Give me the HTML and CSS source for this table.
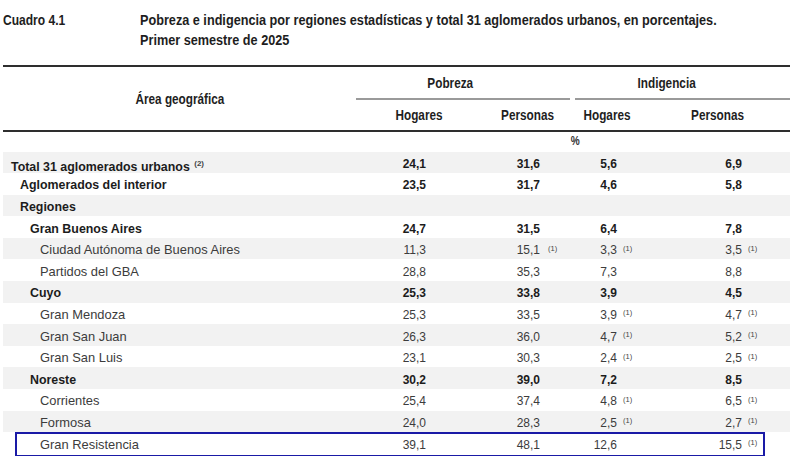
FILE: index.html
```html
<!DOCTYPE html>
<html lang="es">
<head>
<meta charset="utf-8">
<title>Cuadro 4.1</title>
<link rel="stylesheet" href="styles.css">
</head>
<body>
<div class="page">
  <header class="caption">
    <div class="caption-num"><span class="cond cond-left">Cuadro 4.1</span></div>
    <div class="caption-title">
      <span class="cond-line">Pobreza e indigencia por regiones estadísticas y total 31 aglomerados urbanos, en porcentajes.</span>
      <span class="cond-line">Primer semestre de 2025</span>
    </div>
  </header>

  <div class="table">
    <div class="thead">
      <div class="th th-area"><span class="cond">Área geográfica</span></div>
      <div class="th th-group th-pob"><span class="cond">Pobreza</span></div>
      <div class="th th-group th-ind"><span class="cond">Indigencia</span></div>
      <div class="th th-sub th-c1"><span class="cond">Hogares</span></div>
      <div class="th th-sub th-c2"><span class="cond">Personas</span></div>
      <div class="th th-sub th-c3"><span class="cond">Hogares</span></div>
      <div class="th th-sub th-c4"><span class="cond">Personas</span></div>
    </div>
    <div class="unit-row"><span class="cond">%</span></div>

    <div class="row bold">
      <div class="label l0">Total 31 aglomerados urbanos <span class="note">(2)</span></div>
      <div class="cell c1"><span class="num">24,1</span></div>
      <div class="cell c2"><span class="num">31,6</span></div>
      <div class="cell c3"><span class="num">5,6</span></div>
      <div class="cell c4"><span class="num">6,9</span></div>
    </div>
    <div class="row bold">
      <div class="label l1">Aglomerados del interior</div>
      <div class="cell c1"><span class="num">23,5</span></div>
      <div class="cell c2"><span class="num">31,7</span></div>
      <div class="cell c3"><span class="num">4,6</span></div>
      <div class="cell c4"><span class="num">5,8</span></div>
    </div>
    <div class="row bold">
      <div class="label l1">Regiones</div>
      <div class="cell c1"></div>
      <div class="cell c2"></div>
      <div class="cell c3"></div>
      <div class="cell c4"></div>
    </div>
    <div class="row bold">
      <div class="label l2">Gran Buenos Aires</div>
      <div class="cell c1"><span class="num">24,7</span></div>
      <div class="cell c2"><span class="num">31,5</span></div>
      <div class="cell c3"><span class="num">6,4</span></div>
      <div class="cell c4"><span class="num">7,8</span></div>
    </div>
    <div class="row">
      <div class="label l3">Ciudad Autónoma de Buenos Aires</div>
      <div class="cell c1"><span class="num">11,3</span></div>
      <div class="cell c2"><span class="num">15,1</span><span class="note">(1)</span></div>
      <div class="cell c3"><span class="num">3,3</span><span class="note">(1)</span></div>
      <div class="cell c4"><span class="num">3,5</span><span class="note">(1)</span></div>
    </div>
    <div class="row">
      <div class="label l3">Partidos del GBA</div>
      <div class="cell c1"><span class="num">28,8</span></div>
      <div class="cell c2"><span class="num">35,3</span></div>
      <div class="cell c3"><span class="num">7,3</span></div>
      <div class="cell c4"><span class="num">8,8</span></div>
    </div>
    <div class="row bold">
      <div class="label l2">Cuyo</div>
      <div class="cell c1"><span class="num">25,3</span></div>
      <div class="cell c2"><span class="num">33,8</span></div>
      <div class="cell c3"><span class="num">3,9</span></div>
      <div class="cell c4"><span class="num">4,5</span></div>
    </div>
    <div class="row">
      <div class="label l3">Gran Mendoza</div>
      <div class="cell c1"><span class="num">25,3</span></div>
      <div class="cell c2"><span class="num">33,5</span></div>
      <div class="cell c3"><span class="num">3,9</span><span class="note">(1)</span></div>
      <div class="cell c4"><span class="num">4,7</span><span class="note">(1)</span></div>
    </div>
    <div class="row">
      <div class="label l3">Gran San Juan</div>
      <div class="cell c1"><span class="num">26,3</span></div>
      <div class="cell c2"><span class="num">36,0</span></div>
      <div class="cell c3"><span class="num">4,7</span><span class="note">(1)</span></div>
      <div class="cell c4"><span class="num">5,2</span><span class="note">(1)</span></div>
    </div>
    <div class="row">
      <div class="label l3">Gran San Luis</div>
      <div class="cell c1"><span class="num">23,1</span></div>
      <div class="cell c2"><span class="num">30,3</span></div>
      <div class="cell c3"><span class="num">2,4</span><span class="note">(1)</span></div>
      <div class="cell c4"><span class="num">2,5</span><span class="note">(1)</span></div>
    </div>
    <div class="row bold">
      <div class="label l2">Noreste</div>
      <div class="cell c1"><span class="num">30,2</span></div>
      <div class="cell c2"><span class="num">39,0</span></div>
      <div class="cell c3"><span class="num">7,2</span></div>
      <div class="cell c4"><span class="num">8,5</span></div>
    </div>
    <div class="row">
      <div class="label l3">Corrientes</div>
      <div class="cell c1"><span class="num">25,4</span></div>
      <div class="cell c2"><span class="num">37,4</span></div>
      <div class="cell c3"><span class="num">4,8</span><span class="note">(1)</span></div>
      <div class="cell c4"><span class="num">6,5</span><span class="note">(1)</span></div>
    </div>
    <div class="row">
      <div class="label l3">Formosa</div>
      <div class="cell c1"><span class="num">24,0</span></div>
      <div class="cell c2"><span class="num">28,3</span></div>
      <div class="cell c3"><span class="num">2,5</span><span class="note">(1)</span></div>
      <div class="cell c4"><span class="num">2,7</span><span class="note">(1)</span></div>
    </div>
    <div class="row highlight">
      <div class="label l3">Gran Resistencia</div>
      <div class="cell c1"><span class="num">39,1</span></div>
      <div class="cell c2"><span class="num">48,1</span></div>
      <div class="cell c3"><span class="num">12,6</span></div>
      <div class="cell c4"><span class="num">15,5</span><span class="note">(1)</span></div>
    </div>
  </div>
</div>
</body>
</html>
```

FILE: styles.css
```css
* { box-sizing: border-box; }

html, body {
  margin: 0;
  padding: 0;
  background: #ffffff;
}

body {
  width: 790px;
  height: 456px;
  overflow: hidden;
  font-family: "Liberation Sans", Arial, sans-serif;
  color: #222222;
}

.page {
  width: 795px;
  padding-left: 3px;
}

/* condensed look: Liberation Sans squeezed horizontally */
.cond {
  display: inline-block;
  white-space: nowrap;
  transform: scaleX(0.84);
  transform-origin: center;
}

.cond-left {
  transform: scaleX(0.86);
  transform-origin: left center;
}

.cond-line {
  display: block;
  white-space: nowrap;
  transform: scaleX(0.905);
  transform-origin: left center;
}

/* ---------- caption ---------- */
.caption {
  display: flex;
  padding-top: 10px;
  margin-bottom: 15px;
  font-weight: bold;
  font-size: 14px;
  line-height: 20px;
  color: #1e1e1e;
}

.caption-num {
  width: 137px;
  flex: none;
}

/* ---------- table header ---------- */
.table {
  width: 792px;
}

.thead {
  display: grid;
  grid-template-columns: 353px 127px 90px 68px 154px;
  grid-template-rows: 33px 30px;
  border-top: 2px solid #2e2e2e;
  border-bottom: 2px solid #2e2e2e;
  font-weight: bold;
  font-size: 14px;
  color: #1e1e1e;
}

.th {
  display: flex;
  align-items: center;
  justify-content: center;
  line-height: 16px;
}

.th-area {
  grid-column: 1;
  grid-row: 1 / span 2;
}

.th-group {
  border-bottom: 2px solid #9a9a9a;
  grid-row: 1;
}

.th-pob {
  grid-column: 2 / span 2;
  margin-right: 3px;
  padding-right: 26px;
}

.th-ind {
  grid-column: 4 / span 2;
  margin-left: 2px;
  padding-right: 36px;
}

.th-sub { grid-row: 2; }
.th-c1 { grid-column: 2; }
.th-c2 { grid-column: 3; }
.th-c3 { grid-column: 4; }
.th-c4 { grid-column: 5; }

.unit-row {
  display: flex;
  justify-content: center;
  height: 19.5px;
  padding-left: 353px;
  font-weight: bold;
  font-size: 12px;
  line-height: 19.5px;
  color: #333333;
}

/* ---------- body rows ---------- */
.row {
  position: relative;
  display: grid;
  grid-template-columns: 353px 127px 90px 68px 154px;
  height: 21.6px;
  padding-top: 4.3px;
  font-size: 12px;
  line-height: 16px;
  color: #3c3c3c;
  white-space: nowrap;
}

.row:nth-of-type(odd) {
  background: #f2f2f2;
}

.row.bold {
  font-weight: bold;
  color: #1c1c1c;
}

.label {
  font-size: 12.9px;
}

.row.bold .label {
  font-size: 12.4px;
}

.label.l0 { padding-left: 8px; }
.label.l1 { padding-left: 17px; }
.label.l2 { padding-left: 27px; }
.label.l3 { padding-left: 37px; }

.cell {
  display: flex;
  align-items: baseline;
}

.num {
  text-align: right;
  flex: none;
}

.c1 .num { width: 70px; }
.c2 .num { width: 57px; }
.c3 .num { width: 44px; }
.c4 .num { width: 101px; }

.note {
  font-size: 7.5px;
  font-weight: normal;
  color: #444444;
}

.cell .note {
  align-self: flex-start;
  line-height: 1;
  margin-top: 2.5px;
  margin-left: 6px;
}

.c2 .note { margin-left: 8px; }

.label .note {
  font-size: 8px;
  font-weight: bold;
  vertical-align: 5px;
  margin-left: 1px;
}

/* highlight annotation box */
.row.highlight::after {
  content: "";
  position: absolute;
  left: 12px;
  top: -0.5px;
  width: 746px;
  height: 21px;
  border: 2px solid #1a1aa6;
}
```
